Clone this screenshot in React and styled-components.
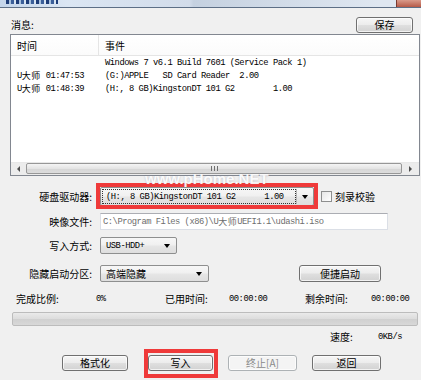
import React from "react";
import styled, { createGlobalStyle } from "styled-components";

const GlobalStyle = createGlobalStyle`
  html, body { margin: 0; padding: 0; background: #f0f0f0; }
  body {
    font-family: "Noto Sans CJK SC", "Liberation Sans", sans-serif;
    font-size: 10px;
    color: #000;
  }
  * { box-sizing: border-box; }
`;

const Window = styled.div`
  position: relative;
  width: 421px;
  height: 380px;
  overflow: hidden;
  background: #f0f0f0;
  display: flex;
  flex-direction: column;
`;

const TitleStrip = styled.div`
  flex: none;
  height: 8px;
  border-bottom: 1px solid #5d6f86;
  background: linear-gradient(to right, #c4d5ea 0, #dbe6f3 16%, #d2dcea 45%, #c5d1e0 46%, #dfe7f1 90%);
  display: flex;
  justify-content: space-between;
`;

const TitleIcon = styled.div`
  width: 52px;
  height: 4px;
  margin-left: 6px;
  background: repeating-linear-gradient(to right, #1d3c78 0 3px, #a7c0dc 3px 5px, #3b5f9a 5px 8px, #d8e4f0 8px 10px);
`;

const CloseCap = styled.div`
  width: 25px;
  height: 7px;
  background: linear-gradient(#d99a8a, #b65a48);
  border-left: 1px solid #7a3a30;
`;

const HeaderRow = styled.div`
  flex: none;
  height: 16px;
  margin-top: 9px;
  padding: 0 8px 0 11px;
  display: flex;
  align-items: center;
  justify-content: space-between;
`;

const Text = styled.span`
  font-family: "Noto Sans CJK SC", sans-serif;
  font-size: 10px;
  line-height: 12px;
  color: ${(p) => p.$color || "#000"};
  white-space: nowrap;
`;

const Mono = styled.span`
  display: inline-block;
  height: 12px;
  font-family: "Liberation Mono", "Noto Sans CJK SC", monospace;
  font-size: 8.8px;
  letter-spacing: -0.48px;
  line-height: 12px;
  color: ${(p) => p.$color || "#000"};
  white-space: pre;
`;

const Han = styled.span`
  display: inline-block;
  height: 12px;
  vertical-align: top;
  font-family: "Noto Sans CJK SC", sans-serif;
  font-size: 9px;
  line-height: 12px;
  letter-spacing: 0.5px;
`;

const Button = styled.button`
  flex: none;
  width: ${(p) => p.$w}px;
  height: ${(p) => p.$h || 16}px;
  margin-right: ${(p) => p.$mr || 0}px;
  padding: 0;
  border: 1px solid ${(p) => (p.disabled ? "#adb2b5" : "#707070")};
  border-radius: 3px;
  background: ${(p) =>
    p.disabled
      ? "#f4f4f4"
      : "linear-gradient(#f6f6f6 0%, #ececec 48%, #dfdfdf 52%, #d2d2d2 100%)"};
  box-shadow: inset 0 0 0 1px rgba(255, 255, 255, 0.7);
  font-family: "Noto Sans CJK SC", sans-serif;
  font-size: 10px;
  line-height: 12px;
  color: ${(p) => (p.disabled ? "#8a8a8a" : "#000")};
  display: flex;
  align-items: center;
  justify-content: center;
  position: relative;
`;

const Highlight = styled.div`
  position: relative;
  flex: none;
  display: flex;
  &::after {
    content: "";
    position: absolute;
    top: ${(p) => -p.$t}px;
    right: ${(p) => -p.$r}px;
    bottom: ${(p) => -p.$b}px;
    left: ${(p) => -p.$l}px;
    border: 4px solid #ef3a3a;
    pointer-events: none;
  }
`;

const ListBox = styled.div`
  flex: none;
  margin: 1px 0 0 10px;
  width: 410px;
  height: 142px;
  border: 1px solid #828790;
  background: #fff;
  display: flex;
  flex-direction: column;
`;

const ListHeader = styled.div`
  flex: none;
  height: 21px;
  display: grid;
  grid-template-columns: 88px 1fr;
  border-bottom: 1px solid #e5e5e5;
  background: linear-gradient(#ffffff, #fbfbfb);
`;

const HeaderCell = styled.div`
  display: flex;
  align-items: center;
  padding: 1px 0 0 6px;
  border-right: ${(p) => (p.$divider ? "1px solid #e5e5e5" : "none")};
`;

const ListBody = styled.div`
  flex: 1;
`;

const ListRow = styled.div`
  height: 13px;
  display: grid;
  grid-template-columns: 88px 1fr;
  align-items: center;
`;

const Cell = styled.div`
  height: 13px;
  padding-left: 6px;
  display: flex;
  align-items: center;
  white-space: nowrap;
`;

const HScroll = styled.div`
  flex: none;
  height: 13px;
  display: flex;
  background: #ececec;
  border-top: 1px solid #e8e8e8;
`;

const ScrollArrow = styled.div`
  flex: none;
  width: ${(p) => p.$w}px;
  display: flex;
  align-items: center;
  justify-content: center;
  &::before {
    content: "";
    width: 0;
    height: 0;
    border-top: 3px solid transparent;
    border-bottom: 3px solid transparent;
    ${(p) => (p.$dir === "left" ? "border-right: 3px solid #4d4d4d;" : "border-left: 3px solid #4d4d4d;")}
  }
`;

const ScrollThumb = styled.div`
  flex: 1;
  margin: 0 0 1px;
  border: 1px solid #979797;
  border-radius: 2px;
  background: linear-gradient(#f4f4f4, #e4e4e4 50%, #d6d6d6 51%, #dcdcdc);
  display: flex;
  align-items: center;
  justify-content: center;
`;

const Grip = styled.div`
  width: 7px;
  height: 5px;
  background: repeating-linear-gradient(to right, #6f6f6f 0 1px, transparent 1px 3px);
`;

const Form = styled.div`
  flex: none;
  margin-top: 11px;
  display: flex;
  flex-direction: column;
`;

const FormRow = styled.div`
  height: ${(p) => p.$h}px;
  margin-top: ${(p) => p.$mt || 0}px;
  display: flex;
  align-items: center;
`;

const Label = styled.div`
  flex: none;
  width: 93px;
  padding-right: 1px;
  text-align: right;
  font-family: "Noto Sans CJK SC", sans-serif;
  font-size: 10px;
  line-height: 12px;
  margin-right: ${(p) => p.$gap || 7}px;
  white-space: nowrap;
`;

const Combo = styled.div`
  flex: none;
  width: ${(p) => p.$w}px;
  height: ${(p) => p.$h}px;
  border: 1px solid #8e8f8f;
  border-radius: 2px;
  background: linear-gradient(#f7f7f7 0%, #f0f0f0 48%, #e6e6e6 52%, #dedede 100%);
  display: flex;
  align-items: center;
  padding: 1px;
`;

const ComboText = styled.div`
  flex: 1;
  height: 100%;
  display: flex;
  align-items: center;
  padding-left: 3px;
  border: ${(p) => (p.$focus ? "1px dotted #333" : "1px solid transparent")};
  overflow: hidden;
`;

const ComboArrow = styled.div`
  flex: none;
  width: 16px;
  height: 100%;
  display: flex;
  align-items: center;
  justify-content: center;
  border-left: ${(p) => (p.$split ? "1px solid #b8b8b8" : "none")};
  &::before {
    content: "";
    width: 0;
    height: 0;
    border-left: 3px solid transparent;
    border-right: 3px solid transparent;
    border-top: 4px solid #000;
  }
`;

const Check = styled.div`
  flex: none;
  width: 11px;
  height: 11px;
  margin: 0 3px 0 7px;
  border: 1px solid #8e8f8f;
  background: linear-gradient(135deg, #e6e6e6, #ffffff);
`;

const TextBox = styled.div`
  flex: none;
  width: ${(p) => p.$w}px;
  height: ${(p) => p.$h}px;
  border: 1px solid #dbdfe6;
  border-top-color: #abadb3;
  background: #fff;
  display: flex;
  align-items: center;
  padding-left: 2px;
  overflow: hidden;
`;

const Spacer = styled.div`
  flex: none;
  width: ${(p) => p.$w}px;
`;

const StatsRow = styled.div`
  flex: none;
  margin-top: 11px;
  height: 12px;
  padding-left: 16px;
  display: grid;
  grid-template-columns: 80px 69px 64px 76px 66px auto;
  align-items: center;
`;

const Progress = styled.div`
  flex: none;
  margin: 7px 0 0 12px;
  width: 406px;
  height: 14px;
  border: 1px solid #bcbcbc;
  border-radius: 2px;
  background: linear-gradient(#eaeaea, #dcdcdc 50%, #d0d0d0 51%, #d8d8d8);
`;

const SpeedRow = styled.div`
  flex: none;
  margin-top: 5px;
  height: 12px;
  padding-left: 330px;
  display: grid;
  grid-template-columns: 48px auto;
  align-items: center;
`;

const ButtonRow = styled.div`
  flex: none;
  margin-top: 12px;
  padding-left: 62px;
  display: flex;
  gap: 15px;
`;

const Watermark = styled.div`
  position: absolute;
  top: 170px;
  left: 145px;
  font-family: "Liberation Sans", sans-serif;
  font-weight: bold;
  font-size: 15px;
  line-height: 18px;
  color: rgba(255, 255, 255, 0.92);
  text-shadow: 0 0 2px rgba(120, 120, 140, 0.4);
  pointer-events: none;
  white-space: nowrap;
`;

export default function App() {
  return (
    <Window>
      <GlobalStyle />
      <TitleStrip>
        <TitleIcon />
        <CloseCap />
      </TitleStrip>

      <HeaderRow>
        <Text>消息:</Text>
        <Button $w={57}>保存</Button>
      </HeaderRow>

      <ListBox>
        <ListHeader>
          <HeaderCell $divider>
            <Text>时间</Text>
          </HeaderCell>
          <HeaderCell>
            <Text>事件</Text>
          </HeaderCell>
        </ListHeader>
        <ListBody>
          <ListRow>
            <Cell />
            <Cell>
              <Mono>Windows 7 v6.1 Build 7601 (Service Pack 1)</Mono>
            </Cell>
          </ListRow>
          <ListRow>
            <Cell>
              <Mono>
                U<Han>大师</Han> 01:47:53
              </Mono>
            </Cell>
            <Cell>
              <Mono>(G:)APPLE   SD Card Reader  2.00</Mono>
            </Cell>
          </ListRow>
          <ListRow>
            <Cell>
              <Mono>
                U<Han>大师</Han> 01:48:39
              </Mono>
            </Cell>
            <Cell>
              <Mono>(H:, 8 GB)KingstonDT 101 G2        1.00</Mono>
            </Cell>
          </ListRow>
        </ListBody>
        <HScroll>
          <ScrollArrow $w={15} $dir="left" />
          <ScrollThumb>
            <Grip />
          </ScrollThumb>
          <ScrollArrow $w={17} $dir="right" />
        </HScroll>
      </ListBox>

      <Form>
        <FormRow $h={19}>
          <Label $gap={7}>硬盘驱动器:</Label>
          <Highlight $t={4} $r={4} $b={3} $l={4}>
            <Combo $w={214} $h={19}>
              <ComboText $focus>
                <Mono>(H:, 8 GB)KingstonDT 101 G2      1.00</Mono>
              </ComboText>
              <ComboArrow $split />
            </Combo>
          </Highlight>
          <Check />
          <Text>刻录校验</Text>
        </FormRow>

        <FormRow $h={17} $mt={7}>
          <Label>映像文件:</Label>
          <TextBox $w={288} $h={17}>
            <Mono $color="#6d6d6d">
              C:\Program Files (x86)\U<Han>大师</Han>UEFI1.1\udashi.iso
            </Mono>
          </TextBox>
        </FormRow>

        <FormRow $h={17} $mt={7}>
          <Label>写入方式:</Label>
          <Combo $w={77} $h={17}>
            <ComboText>
              <Mono>USB-HDD+</Mono>
            </ComboText>
            <ComboArrow />
          </Combo>
        </FormRow>

        <FormRow $h={17} $mt={11}>
          <Label>隐藏启动分区:</Label>
          <Combo $w={109} $h={17}>
            <ComboText>
              <Text>高端隐藏</Text>
            </ComboText>
            <ComboArrow />
          </Combo>
          <Spacer $w={90} />
          <Button $w={82} $h={17}>
            便捷启动
          </Button>
        </FormRow>
      </Form>

      <StatsRow>
        <Text>完成比例:</Text>
        <Mono>0%</Mono>
        <Text>已用时间:</Text>
        <Mono>00:00:00</Mono>
        <Text>剩余时间:</Text>
        <Mono>00:00:00</Mono>
      </StatsRow>

      <Progress />

      <SpeedRow>
        <Text>速度:</Text>
        <Mono>0KB/s</Mono>
      </SpeedRow>

      <ButtonRow>
        <Button $w={66} $mr={5}>
          格式化
        </Button>
        <Highlight $t={6} $r={5} $b={7} $l={4}>
          <Button $w={65}>写入</Button>
        </Highlight>
        <Button $w={69} disabled>
          终止[A]
        </Button>
        <Button $w={69}>返回</Button>
      </ButtonRow>

      <Watermark>www.pHome.NET</Watermark>
    </Window>
  );
}
